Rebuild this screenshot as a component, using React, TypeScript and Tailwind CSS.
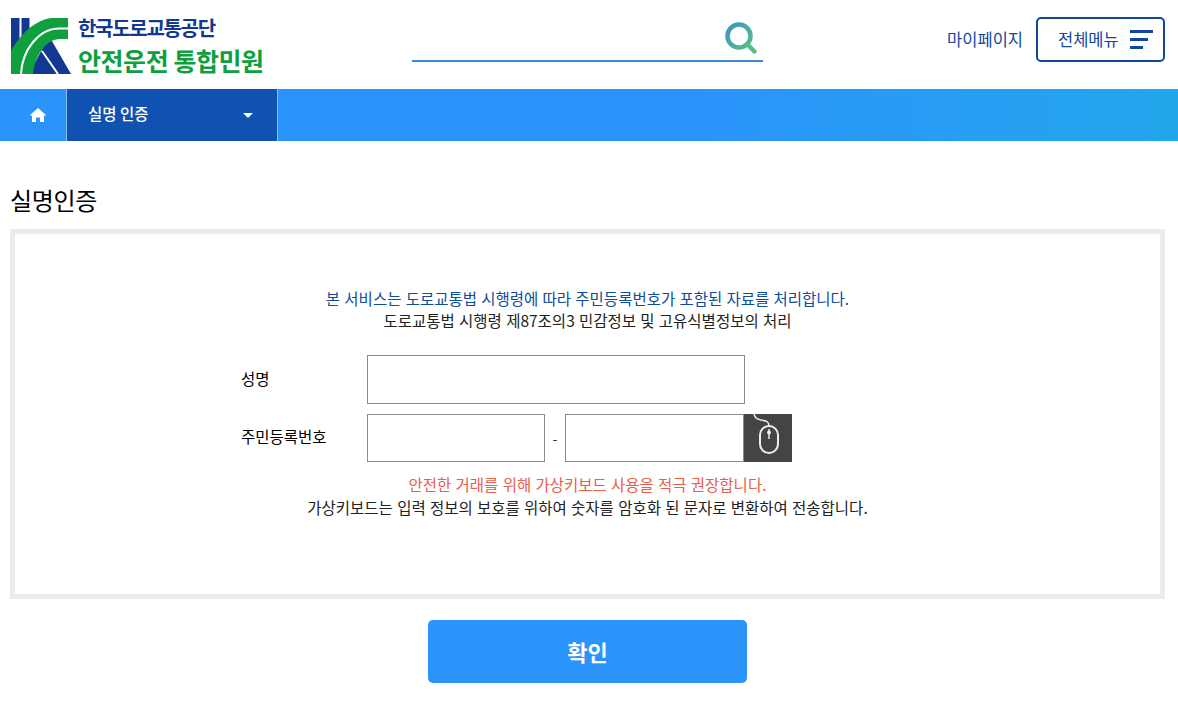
import React from 'react';

const font = { fontFamily: '"Noto Sans CJK KR", "Noto Sans", sans-serif' };

const Logo = () => (
  <div className="flex items-start w-[412px] pl-[11px] self-start mt-[15px]">
    <svg width="60" height="56" viewBox="0 0 60 56" className="shrink-0 mt-[3px]">
      <rect x="0" y="0" width="8.5" height="40" fill="#12388f" />
      <rect x="10.5" y="0" width="8" height="30" fill="#12388f" />
      <path d="M18 56 L38 18 L60 56 Z" fill="#12388f" />
      <path d="M31 33 L47 56" stroke="#ffffff" strokeWidth="2" />
      <path d="M0 56 V33 C6 22 20 3 40 0 H57 V21 H49 C36 21 24 36 22 56 Z" fill="#0f9f3f" />
      <path d="M10 56 C11 32 28 10.5 48 10.5 H57" stroke="#ffffff" strokeWidth="2" fill="none" />
    </svg>
    <div className="ml-[7px] flex flex-col">
      <span className="text-[20px] leading-[26px] font-bold text-[#12388f] tracking-[-1.3px] whitespace-nowrap">한국도로교통공단</span>
      <span className="mt-[3px] text-[25px] leading-[32px] font-bold text-[#0f9f3f] tracking-[-0.45px] whitespace-nowrap">안전운전 통합민원</span>
    </div>
  </div>
);

const SearchIcon = () => (
  <svg width="34" height="36" viewBox="0 0 34 36">
    <defs>
      <linearGradient id="searchGrad" x1="0" y1="0" x2="1" y2="1">
        <stop offset="0" stopColor="#3f96c4" />
        <stop offset="1" stopColor="#55bd85" />
      </linearGradient>
    </defs>
    <circle cx="15" cy="16" r="11.5" fill="none" stroke="url(#searchGrad)" strokeWidth="4.5" />
    <path d="M24 25 L30.5 31.5" stroke="#55bd85" strokeWidth="4.5" strokeLinecap="round" />
  </svg>
);

const MouseIcon = () => (
  <svg width="48" height="48" viewBox="0 0 48 48" className="block">
    <path d="M10 0 C11 4 13 5 17 6 C22 7 25 7 25 12" fill="none" stroke="#eeeeee" strokeWidth="1.5" />
    <rect x="16" y="12" width="18" height="27" rx="9" fill="none" stroke="#eeeeee" strokeWidth="2" />
    <path d="M25 15 V25" stroke="#eeeeee" strokeWidth="1.5" />
    <circle cx="25" cy="18.5" r="2" fill="#eeeeee" />
  </svg>
);

const App = () => {
  return (
    <div className="bg-white text-black w-full h-[710px] overflow-hidden" style={font}>
      <header className="h-[89px] flex">
        <Logo />
        <div className="w-[351px] h-[62px] border-b-2 border-[#3a8ad6] flex justify-end items-end pr-[5px] pb-[4px] box-border">
          <SearchIcon />
        </div>
        <div className="ml-auto pr-[13px] mt-[17px] h-[45px] flex items-center">
          <span className="text-[16.5px] text-[#12479c] mr-[13px]">마이페이지</span>
          <button className="w-[129px] h-[45px] border-2 border-[#12479c] rounded-[5px] flex items-center pl-[20px] text-[16.5px] text-[#12479c]">
            <span>전체메뉴</span>
            <span className="ml-[11px] flex flex-col gap-[5px]">
              <span className="block w-[23px] h-[3px] bg-[#12479c]" />
              <span className="block w-[18px] h-[3px] bg-[#12479c]" />
              <span className="block w-[13px] h-[3px] bg-[#12479c]" />
            </span>
          </button>
        </div>
      </header>

      <nav className="h-[52px] flex bg-gradient-to-r from-[#2b94fb] from-60% to-[#23a6ec]">
        <div className="w-[66px] flex items-center justify-center pl-[10px]">
          <svg width="18" height="16" viewBox="0 0 18 16" fill="#ffffff">
            <path d="M9 1 L17.5 8.5 L15 8.5 L15 15 L11 15 L11 10.5 L7 10.5 L7 15 L3 15 L3 8.5 L0.5 8.5 Z" />
          </svg>
        </div>
        <div className="w-[212px] bg-[#0f52b2] border-x border-[#8fbcf0] flex items-center justify-between pl-[21px] pr-[24px] text-white text-[15.5px] font-medium">
          <span className="pb-[2px]">실명 인증</span>
          <span className="w-0 h-0 border-x-[5px] border-x-transparent border-t-[5px] border-t-white" />
        </div>
      </nav>

      <h2 className="ml-[10px] mt-[41px] h-[47px] text-[24px] tracking-[-0.3px] leading-[36px] font-normal text-black">실명인증</h2>

      <section className="ml-[10px] mr-[13px] h-[370px] border-[5px] border-[#ebebeb] flex flex-col items-center pt-[53px] text-[15.5px] [word-spacing:0.8px]">
        <p className="leading-[22px] text-[#0f4c9a]">본 서비스는 도로교통법 시행령에 따라 주민등록번호가 포함된 자료를 처리합니다.</p>
        <p className="leading-[22px] text-[#222]">도로교통법 시행령 제87조의3 민감정보 및 고유식별정보의 처리</p>

        <div className="w-full pl-[226px] mt-[24px]">
          <div className="flex items-center h-[49px]">
            <label className="w-[126px] pb-[2px] text-black">성명</label>
            <input className="w-[378px] h-[49px] border border-[#8a8a8a] bg-white" />
          </div>
          <div className="flex items-center h-[48px] mt-[10px]">
            <label className="w-[126px] pb-[2px] text-black">주민등록번호</label>
            <input className="w-[178px] h-[48px] border border-[#8a8a8a] bg-white" />
            <span className="w-[20px] text-center text-[14px] text-[#333]">-</span>
            <input className="w-[179px] h-[48px] border border-[#8a8a8a] bg-white" />
            <button className="w-[48px] h-[48px] bg-[#444444]"><MouseIcon /></button>
          </div>
        </div>

        <p className="mt-[11px] leading-[23px] text-[#e8604c]">안전한 거래를 위해 가상키보드 사용을 적극 권장합니다.</p>
        <p className="leading-[23px] text-[#222]">가상키보드는 입력 정보의 보호를 위하여 숫자를 암호화 된 문자로 변환하여 전송합니다.</p>
      </section>

      <div className="flex justify-center mt-[21px] pr-[3px]">
        <button className="w-[319px] h-[63px] bg-[#2b94fb] rounded-[5px] text-white text-[22px] font-bold">확인</button>
      </div>
    </div>
  );
};

export default App;
